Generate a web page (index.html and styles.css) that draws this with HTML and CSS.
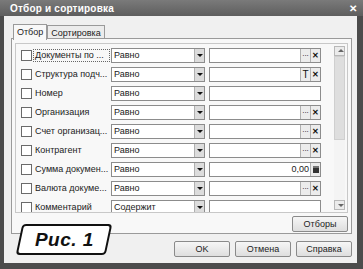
FILE: index.html
```html
<!DOCTYPE html>
<html lang="ru">
<head>
  <meta charset="UTF-8" />
  <title>Отбор и сортировка</title>
  <link rel="stylesheet" href="styles.css">
</head>
<body>

<div class="window">
  <div class="titlebar">
    <span class="title">Отбор и сортировка</span>
    <span class="close">✕</span>
  </div>

  <div class="client">
    <div class="tabs">
      <div class="tab active">Отбор</div>
      <div class="tab">Сортировка</div>
    </div>

    <div class="panel">
      <div class="list">
        <div class="rows">
          <div class="row">
            <span class="check"></span>
            <span class="label focus">Документы по ...</span>
            <span class="select"><span class="stext">Равно</span><span class="drop"></span></span>
            <span class="value"><span class="vtext"></span><span class="btn dots">...</span><span class="btn x">✕</span></span>
          </div>
          <div class="row">
            <span class="check"></span>
            <span class="label">Структура подч...</span>
            <span class="select"><span class="stext">Равно</span><span class="drop"></span></span>
            <span class="value"><span class="vtext"></span><span class="btn t">T</span><span class="btn x">✕</span></span>
          </div>
          <div class="row">
            <span class="check"></span>
            <span class="label">Номер</span>
            <span class="select"><span class="stext">Равно</span><span class="drop"></span></span>
            <span class="value"><span class="vtext"></span></span>
          </div>
          <div class="row">
            <span class="check"></span>
            <span class="label">Организация</span>
            <span class="select"><span class="stext">Равно</span><span class="drop"></span></span>
            <span class="value"><span class="vtext"></span><span class="btn dots">...</span><span class="btn x">✕</span></span>
          </div>
          <div class="row">
            <span class="check"></span>
            <span class="label">Счет организац...</span>
            <span class="select"><span class="stext">Равно</span><span class="drop"></span></span>
            <span class="value"><span class="vtext"></span><span class="btn dots">...</span><span class="btn x">✕</span></span>
          </div>
          <div class="row">
            <span class="check"></span>
            <span class="label">Контрагент</span>
            <span class="select"><span class="stext">Равно</span><span class="drop"></span></span>
            <span class="value"><span class="vtext"></span><span class="btn dots">...</span><span class="btn x">✕</span></span>
          </div>
          <div class="row">
            <span class="check"></span>
            <span class="label">Сумма докумен...</span>
            <span class="select"><span class="stext">Равно</span><span class="drop"></span></span>
            <span class="value"><span class="vtext num">0,00</span><span class="btn calc"><span class="calc-ico"></span></span></span>
          </div>
          <div class="row">
            <span class="check"></span>
            <span class="label">Валюта докуме...</span>
            <span class="select"><span class="stext">Равно</span><span class="drop"></span></span>
            <span class="value"><span class="vtext"></span><span class="btn dots">...</span><span class="btn x">✕</span></span>
          </div>
          <div class="row">
            <span class="check"></span>
            <span class="label">Комментарий</span>
            <span class="select"><span class="stext">Содержит</span><span class="drop"></span></span>
            <span class="value"><span class="vtext"></span></span>
          </div>
        </div>
        <div class="scrollbar">
          <div class="arrow up"></div>
          <div class="thumb"></div>
          <div class="track"></div>
          <div class="arrow down"></div>
        </div>
      </div>
      <div class="panel-foot">
        <button class="button">Отборы</button>
      </div>
    </div>

    <div class="footer">
      <button class="button ok">OK</button>
      <button class="button">Отмена</button>
      <button class="button">Справка</button>
    </div>
  </div>

  <div class="caption"><span class="caption-text">Рис. 1</span></div>
</div>

</body>
</html>
```

FILE: styles.css
```css
html, body { margin: 0; padding: 0; }
body { width: 363px; height: 269px; overflow: hidden; background: #4a4a4a;
       font-family: "Liberation Sans", Arial, sans-serif; font-size: 9px; color: #222; }

.window { position: relative; width: 363px; height: 269px; display: flex; flex-direction: column;
          background: #4c4c4c; }
.titlebar { height: 16px; flex: none; display: flex; align-items: center; justify-content: space-between;
            padding: 0 6px 0 10px; background: linear-gradient(#7a7a7a, #5e5e5e); color: #fff; }
.title { font-weight: bold; font-size: 10px; letter-spacing: 0.2px; }
.close { font-size: 10px; font-weight: bold; }

.client { flex: 1; margin: 0 6px 6px 4px; background: #f0f0f0; padding: 8px 5px 0 7px;
          display: flex; flex-direction: column; }

.tabs { display: flex; height: 14px; padding-left: 2px; }
.tab { border: 1px solid #9a9a9a; border-bottom: none; padding: 1px 3px 0; line-height: 12px;
       background: #ececec; margin-top: 1px; }
.tab.active { background: #f8f8f8; margin-top: 0; position: relative; z-index: 1; height: 14px; }

.panel { border: 1px solid #9a9a9a; background: #f8f8f8; height: 196px; box-sizing: border-box;
         padding: 4px 3px 0 3px; display: flex; flex-direction: column; }

.list { display: flex; height: 168px; border: 1px solid #c8c8c8; background: #f8f8f8; }
.rows { flex: 1; overflow: hidden; padding-top: 2px; }
.row { display: flex; align-items: center; height: 19px; padding-left: 5px; }
.check { width: 9px; height: 9px; border: 1px solid #6a6a6a; background: #fff; flex: none; }
.label { width: 74px; margin-left: 1px; padding-left: 1px; white-space: nowrap; overflow: hidden;
         line-height: 11px; border: 1px dotted transparent; }
.label.focus { border-color: #666; }
.select { display: flex; width: 92px; height: 13px; margin-left: 1px; border: 1px solid #8c8c8c;
          background: #fff; }
.stext { flex: 1; padding-left: 2px; line-height: 13px; }
.drop { width: 9px; border-left: 1px solid #b0b0b0; background: #dcdcdc; position: relative; }
.drop::after { content: ""; position: absolute; left: 2px; top: 5px; border-left: 3px solid transparent;
               border-right: 3px solid transparent; border-top: 3px solid #111; }
.value { display: flex; width: 110px; height: 13px; margin-left: 4px; border: 1px solid #8c8c8c;
         background: #fff; }
.vtext { flex: 1; line-height: 13px; }
.vtext.num { text-align: right; padding-right: 1px; }
.btn { width: 9px; border-left: 1px solid #b0b0b0; background: #ececec; text-align: center;
       line-height: 13px; font-size: 8px; font-weight: bold; color: #111; }
.btn.dots { line-height: 10px; font-weight: normal; }
.btn.t { font-weight: normal; font-size: 10px; }
.btn.calc { display: flex; align-items: center; justify-content: center; }
.calc-ico { width: 6px; height: 7px; background: #333; border-top: 2px solid #777; box-sizing: border-box; }

.scrollbar { width: 11px; display: flex; flex-direction: column; margin: 2px 2px 2px 3px; }
.arrow { height: 8px; border: 1px solid #b8b8b8; background: #ebebeb; position: relative; }
.arrow::after { content: ""; position: absolute; left: 3px; border-left: 3px solid transparent;
                border-right: 3px solid transparent; }
.arrow.up::after { top: 2px; border-bottom: 3px solid #666; }
.arrow.down::after { top: 3px; border-top: 3px solid #666; }
.thumb { height: 82px; background: #dedede; border: 1px solid #cfcfcf; }
.track { flex: 1; background: #f4f4f4; }

.panel-foot { display: flex; justify-content: flex-end; padding: 3px 0 0; }
.button { font-family: inherit; font-size: 9px; color: #222; height: 16px; padding: 0; width: 56px;
          border: 1px solid #8a8a8a; border-radius: 2px; background: linear-gradient(#f6f6f6, #dedede); }

.footer { display: flex; justify-content: flex-end; gap: 5px; padding-top: 7px; }

.caption { position: absolute; left: 19px; top: 224px; width: 86px; height: 27px; border: 2px solid #111;
           border-radius: 4px; background: #fff; transform: skewX(-12deg); display: flex;
           align-items: center; justify-content: center; }
.caption-text { transform: skewX(12deg); font-size: 19px; font-weight: bold; font-style: italic;
                color: #111; letter-spacing: 0.5px; }
```
